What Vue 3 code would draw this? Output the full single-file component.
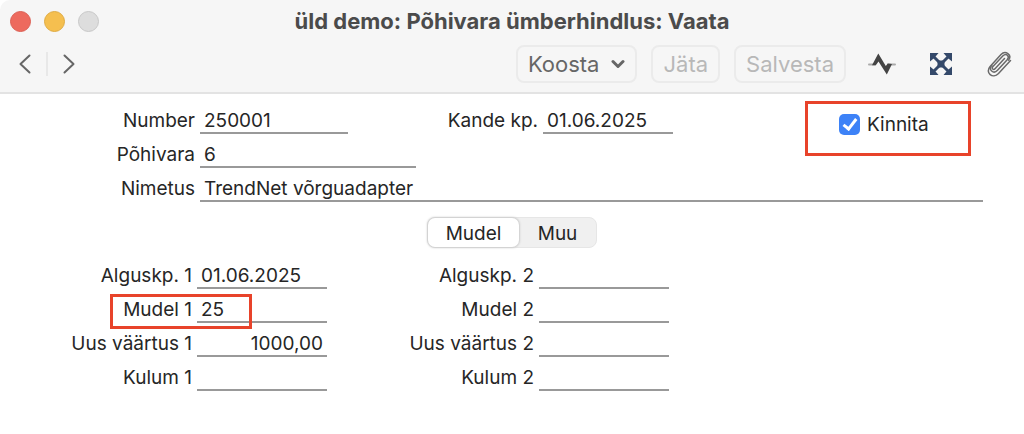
<script setup>
import { ref } from 'vue'

const number = ref('250001')
const entryDate = ref('01.06.2025')
const asset = ref('6')
const assetName = ref('TrendNet võrguadapter')
const confirmed = ref(true)
const activeTab = ref('Mudel')
const tabs = ['Mudel', 'Muu']

const models = ref([
  [
    { id: 'start1', label: 'Alguskp. 1', value: '01.06.2025' },
    { id: 'model1', label: 'Mudel 1', value: '25', marked: true },
    { id: 'value1', label: 'Uus väärtus 1', value: '1000,00', amount: true },
    { id: 'wear1', label: 'Kulum 1', value: '' }
  ],
  [
    { id: 'start2', label: 'Alguskp. 2', value: '' },
    { id: 'model2', label: 'Mudel 2', value: '' },
    { id: 'value2', label: 'Uus väärtus 2', value: '', amount: true },
    { id: 'wear2', label: 'Kulum 2', value: '' }
  ]
])
</script>

<template>
  <div class="window">
    <header class="chrome">
      <div class="titlebar">
        <div class="lights">
          <button class="light close" type="button" aria-label="Sulge"></button>
          <button class="light minimize" type="button" aria-label="Minimeeri"></button>
          <button class="light zoom" type="button" aria-label="Suurenda" disabled></button>
        </div>
        <h1 class="title">üld demo: Põhivara ümberhindlus: Vaata</h1>
      </div>
      <div class="toolbar">
        <nav class="history">
          <button class="icon" type="button" aria-label="Eelmine">
            <svg width="14" height="22" viewBox="0 0 14 22"><path d="M11.500 2.500 2.500 11l9 8.500" /></svg>
          </button>
          <span class="divider"></span>
          <button class="icon" type="button" aria-label="Järgmine">
            <svg width="14" height="22" viewBox="0 0 14 22"><path d="M2.500 2.500l9 8.500-9 8.500" /></svg>
          </button>
        </nav>
        <div class="actions">
          <button class="action" type="button">
            Koosta
            <svg width="14" height="10" viewBox="0 0 14 10"><path d="M2 2.500l5 5 5-5" /></svg>
          </button>
          <button class="action" type="button" disabled>Jäta</button>
          <button class="action" type="button" disabled>Salvesta</button>
        </div>
        <div class="tools">
          <button class="icon" type="button" aria-label="Tegevused">
            <svg width="28" height="24" viewBox="0 0 28 24">
              <path class="thin" d="M1 12.500h6M20 12.500h7" />
              <path class="solid" d="M4 13.300 10.300 1.500l7.500 12.500 2-2.500 4.200.6L18.800 22.500 10.500 9.500 7.800 13.300z" />
            </svg>
          </button>
          <button class="icon" type="button" aria-label="Seosed">
            <svg width="24" height="24" viewBox="0 0 24 24">
              <path class="navy-line" d="M4 4l16 16M20 4 4 20" />
              <path class="navy" d="M1 1h8.500L7 4 4 7 1 9.500zM23 1h-8.500L17 4l3 3 3 2.500zM1 23h8.500L7 20l-3-3-3-2.500zM23 23h-8.500L17 20l3-3 3-2.500zM8.500 8.500h7v7h-7z" />
            </svg>
          </button>
          <button class="icon" type="button" aria-label="Manused">
            <svg width="26" height="28" viewBox="0 0 26 28">
              <path class="clip" d="M18.500 8.500 9 18.800c-1.600 1.700-3.700-.4-2.300-2L17 5.800c3.200-3.200 7.200.6 4.200 4L11.500 20.300c-4 4.300-9.600-.6-5.700-5.100" />
              <path class="clip" d="M24.500 10.500 12.500 23.600c-5.600 5.800-13.800-.6-8.400-7L15 4.600c4.400-4.900 11.400.3 7.600 5.500" />
            </svg>
          </button>
        </div>
      </div>
    </header>

    <main class="form">
      <section class="summary">
        <div class="pair">
          <label for="number">Number</label>
          <input id="number" v-model="number" class="short" type="text" />
        </div>
        <div class="pair second">
          <label for="entry-date">Kande kp.</label>
          <input id="entry-date" v-model="entryDate" class="date" type="text" />
        </div>
        <label class="confirm">
          <input v-model="confirmed" type="checkbox" />
          Kinnita
        </label>
        <div class="pair own-line">
          <label for="asset">Põhivara</label>
          <input id="asset" v-model="asset" class="medium" type="text" />
        </div>
        <div class="pair wide">
          <label for="asset-name">Nimetus</label>
          <input id="asset-name" v-model="assetName" class="full" type="text" />
        </div>
      </section>

      <div class="tabs" role="tablist">
        <button
          v-for="tab in tabs"
          :key="tab"
          type="button"
          role="tab"
          class="tab"
          :class="{ active: tab === activeTab }"
          :aria-selected="tab === activeTab"
          @click="activeTab = tab"
        >{{ tab }}</button>
      </div>

      <section class="models">
        <div v-for="(group, i) in models" :key="i" class="group">
          <div v-for="field in group" :key="field.id" class="pair" :class="{ marked: field.marked }">
            <label :for="field.id">{{ field.label }}</label>
            <input :id="field.id" v-model="field.value" class="date" :class="{ amount: field.amount }" type="text" />
          </div>
        </div>
      </section>
    </main>
  </div>
</template>

<style>
body {
  margin: 0;
  background: #fff;
}
</style>

<style scoped>
.window {
  min-height: 100vh;
  box-sizing: border-box;
  background: #fff;
  color: #262626;
  font-family: Inter, Roboto, "Liberation Sans", sans-serif;
  font-size: 19px;
}
button,
input {
  font: inherit;
  color: inherit;
  margin: 0;
  padding: 0;
  border: 0;
  background: none;
  box-sizing: border-box;
}
svg {
  display: block;
  fill: none;
  stroke: #666;
  stroke-width: 2;
  stroke-linecap: round;
  stroke-linejoin: round;
}
.chrome {
  background: #f6f6f6;
  border-bottom: 2px solid #e3e3e3;
  border-top-left-radius: 10px;
}
.titlebar {
  display: grid;
  grid-template-columns: 100px 1fr 100px;
  align-items: center;
  height: 42px;
}
.lights {
  display: flex;
  gap: 13px;
  padding-left: 10px;
}
.light {
  width: 21px;
  height: 21px;
  border-radius: 50%;
  border: 1px solid;
}
.close {
  background: #ed6a5e;
  border-color: #dc6055;
}
.minimize {
  background: #f5bf4f;
  border-color: #dfab43;
}
.zoom {
  background: #dddddd;
  border-color: #c8c8c8;
}
.title {
  margin: 0;
  text-align: center;
  white-space: nowrap;
  font-size: 22px;
  line-height: 26px;
  font-weight: 700;
  color: #4b4b4b;
}
.toolbar {
  display: flex;
  align-items: center;
  height: 44px;
  padding: 0 12px 6px 18px;
}
.history {
  display: flex;
  align-items: center;
  gap: 14px;
}
.divider {
  width: 2px;
  height: 24px;
  background: #e8e8e8;
}
.actions {
  display: flex;
  gap: 14px;
  margin-left: auto;
}
.action {
  display: flex;
  align-items: center;
  gap: 12px;
  height: 38px;
  padding: 0 10px;
  border: 2px solid #ebebeb;
  border-radius: 8px;
  font-size: 22px;
  line-height: 28px;
  color: #666;
}
.action:disabled {
  color: #b8b8b8;
}
.action svg {
  stroke-width: 3;
}
.tools {
  display: flex;
  align-items: center;
  gap: 33px;
  margin-left: 22px;
}
.thin {
  stroke: #aaa;
}
.solid {
  fill: #444;
  stroke: none;
}
.navy {
  fill: #34496a;
  stroke: none;
}
.navy-line {
  stroke: #34496a;
  stroke-width: 3;
}
.clip {
  stroke: #6a6a6a;
  stroke-width: 1.5;
}
.form {
  padding: 6px 0 32px;
}
.summary {
  display: grid;
  grid-template-columns: 348px 325px 1fr;
  grid-auto-rows: 34px;
  padding-right: 41px;
}
.pair {
  display: flex;
  align-items: flex-end;
  gap: 5px;
  height: 34px;
}
.pair label {
  flex: none;
  line-height: 26px;
  text-align: right;
  white-space: nowrap;
}
.pair input {
  height: 26px;
  padding: 0 4px;
  border-bottom: 2px solid #999;
  line-height: 24px;
}
.summary .pair label {
  width: 195px;
}
.summary .second label {
  width: 190px;
}
.short {
  width: 148px;
}
.date {
  width: 130px;
}
.medium {
  width: 216px;
}
.full {
  flex: 1;
  min-width: 0;
}
.own-line {
  grid-column: 1 / 3;
  grid-row: 2;
}
.wide {
  grid-column: 1 / -1;
  grid-row: 3;
}
.confirm {
  grid-column: 3;
  grid-row: 1 / 3;
  justify-self: end;
  display: flex;
  align-items: flex-start;
  gap: 7px;
  box-sizing: border-box;
  width: 166px;
  height: 55px;
  margin: 1px 12px 0 0;
  padding: 8px 0 0 31px;
  border: 3px solid #e8432a;
  line-height: 26px;
}
.confirm input {
  appearance: none;
  width: 21px;
  height: 21px;
  margin-top: 2px;
  border-radius: 5px;
  background: #fff;
  border: 1px solid #bbb;
}
.confirm input:checked {
  border: 0;
  background: #3d82f7;
}
.confirm input:checked::after {
  content: "";
  display: block;
  width: 5px;
  height: 11px;
  margin: 2px 0 0 7px;
  border: solid #fff;
  border-width: 0 3px 3px 0;
  transform: rotate(38deg);
}
.tabs {
  display: flex;
  width: 170px;
  height: 31px;
  box-sizing: border-box;
  margin: 15px auto 0;
  border: 1px solid #e6e6e6;
  border-radius: 8px;
  background: #f0f0f0;
}
.tab {
  flex: 76;
  padding-top: 2px;
  border-radius: 7px;
}
.tab.active {
  flex: 90;
  background: #fff;
  box-shadow: 0 0 2px 1px #ccc;
}
.models {
  display: flex;
  gap: 12px;
  padding-top: 7px;
}
.group .pair label {
  width: 192px;
}
.group + .group .pair label {
  width: 195px;
}
.group .amount {
  text-align: right;
}
.marked {
  position: relative;
}
.marked::after {
  content: "";
  position: absolute;
  left: 110px;
  right: 75px;
  top: 5px;
  height: 29px;
  border: 3px solid #e8432a;
  pointer-events: none;
}
</style>
